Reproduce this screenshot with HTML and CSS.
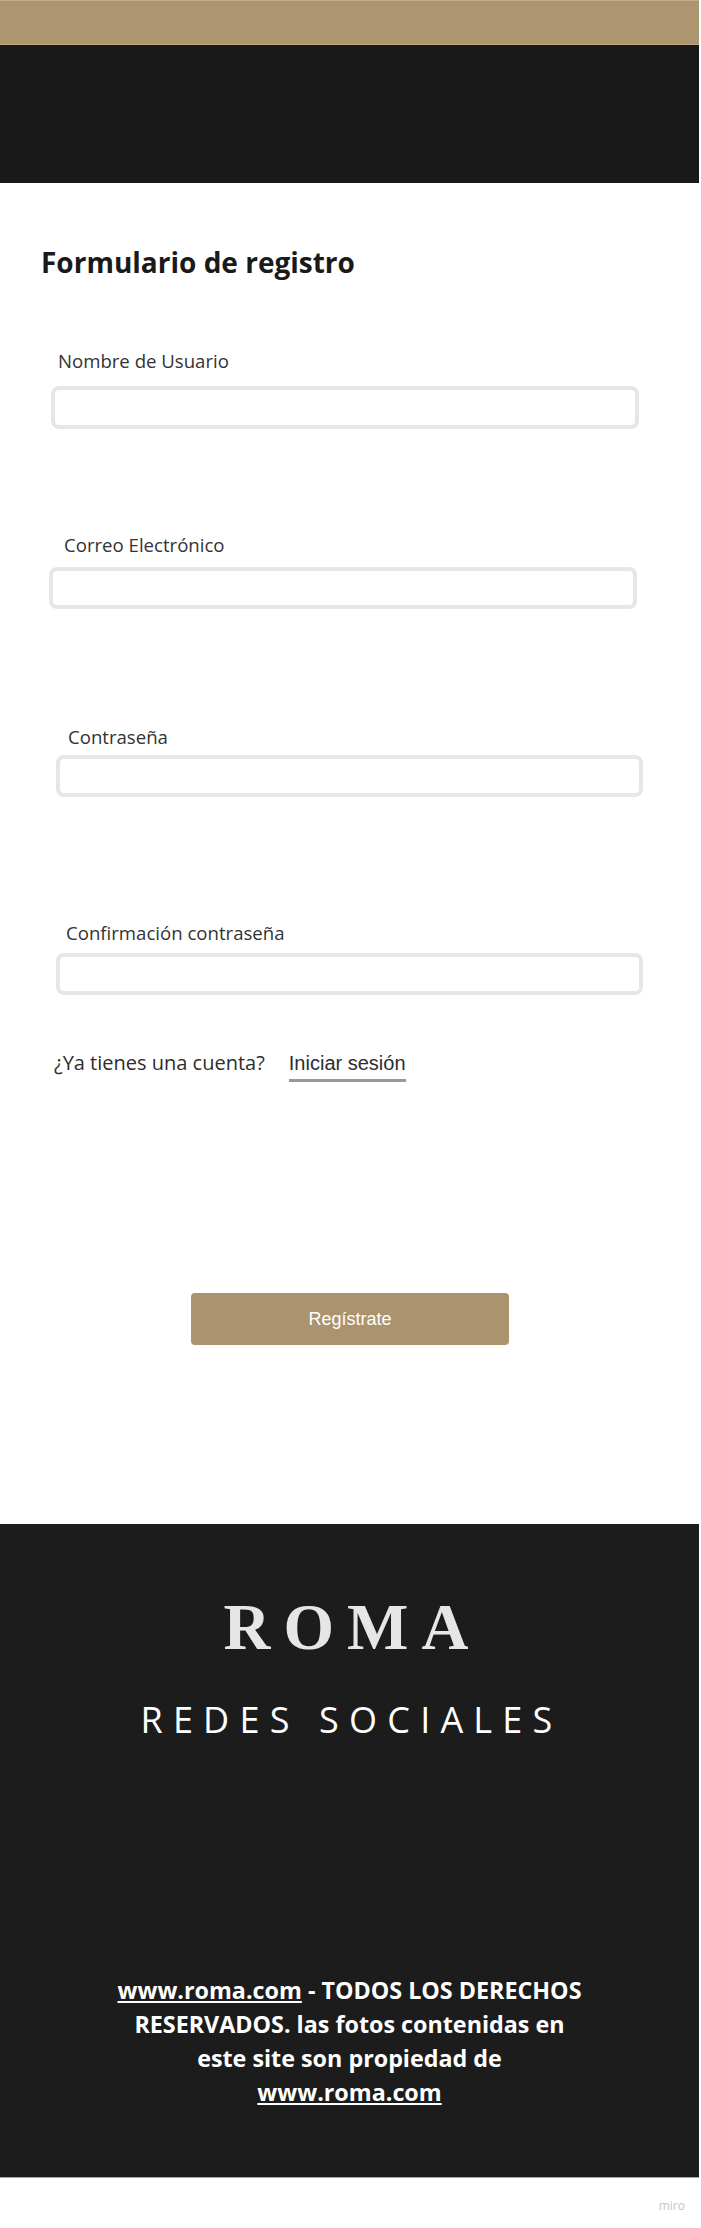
FILE: index.html
```html
<!DOCTYPE html>
<html lang="es">
<head>
<meta charset="utf-8">
<title>Formulario de registro - ROMA</title>
<link rel="stylesheet" href="styles.css">
</head>
<body>
<div class="page">
  <header class="header">
    <div class="header-top"></div>
    <div class="header-main"></div>
  </header>

  <main class="main">
    <h1 class="title">Formulario de registro</h1>

    <div class="field field-user">
      <label class="label" for="user">Nombre de Usuario</label>
      <input class="input" id="user" type="text">
    </div>

    <div class="field field-email">
      <label class="label" for="email">Correo Electrónico</label>
      <input class="input" id="email" type="email">
    </div>

    <div class="field field-pass">
      <label class="label" for="pass">Contraseña</label>
      <input class="input" id="pass" type="password">
    </div>

    <div class="field field-confirm">
      <label class="label" for="confirm">Confirmación contraseña</label>
      <input class="input" id="confirm" type="password">
    </div>

    <div class="login-row">
      <span class="login-question">¿Ya tienes una cuenta?</span>
      <a class="login-link" href="#">Iniciar sesión</a>
    </div>

    <div class="submit-row">
      <button class="submit" type="button">Regístrate</button>
    </div>
  </main>

  <footer class="footer">
    <div class="brand">ROMA</div>
    <div class="social">REDES SOCIALES</div>
    <p class="copyright"><a href="#">www.roma.com</a> - TODOS LOS DERECHOS RESERVADOS. las fotos contenidas en este site son propiedad de <a href="#">www.roma.com</a></p>
  </footer>

  <div class="watermark"><span>miro</span></div>
</div>
</body>
</html>
```

FILE: styles.css
```css
* {
  box-sizing: border-box;
}

html, body {
  margin: 0;
  padding: 0;
  background: #ffffff;
}

body {
  font-family: "Open Sans", "Liberation Sans", sans-serif;
  color: #2e2e2e;
}

.page {
  width: 699px;
}

/* Header */
.header-top {
  height: 45px;
  background: #ad956f;
  border-top: 1px solid #c2ad8c;
  border-bottom: 1px solid #bfa988;
}

.header-main {
  height: 138px;
  background: #191919;
}

/* Main */
.main {
  padding: 61px 0 179px;
  display: flex;
  flex-direction: column;
}

.title {
  margin: 0 0 0 41px;
  font-size: 28px;
  line-height: 36px;
  font-weight: 700;
  color: #1a1a1a;
}

.field {
  display: flex;
  flex-direction: column;
}

.label {
  font-size: 18.6px;
  line-height: 24px;
  color: #333333;
}

.input {
  height: 42px;
  width: 588px;
  border: 4px solid #e6e6e6;
  border-radius: 8px;
  background: #ffffff;
  outline: none;
  font: inherit;
}

.field-user { margin-top: 69px; }
.field-user .label { margin-left: 58px; }
.field-user .input { margin: 13px 0 0 51px; height: 43px; }

.field-email { margin-top: 104px; }
.field-email .label { margin-left: 64px; }
.field-email .input { margin: 10px 0 0 49px; }

.field-pass { margin-top: 116px; }
.field-pass .label { margin-left: 68px; }
.field-pass .input { margin: 6px 0 0 56px; width: 587px; }

.field-confirm { margin-top: 124px; }
.field-confirm .label { margin-left: 66px; }
.field-confirm .input { margin: 8px 0 0 56px; width: 587px; }

.login-row {
  margin: 54px 0 0 54px;
  display: flex;
  align-items: baseline;
  gap: 24px;
}

.login-question {
  font-size: 20px;
  line-height: 28px;
  color: #2e2e2e;
}

.login-link {
  display: inline-block;
  font-family: "Liberation Sans", Arial, sans-serif;
  font-size: 20px;
  line-height: 28px;
  color: #2e2e2e;
  text-decoration: none;
  padding-bottom: 2px;
  border-bottom: 3px solid #999999;
}

.submit-row {
  margin-top: 211px;
  display: flex;
  padding-left: 191px;
}

.submit {
  width: 318px;
  height: 52px;
  border: none;
  border-radius: 4px;
  background: #ab936e;
  color: #ffffff;
  font-family: "Liberation Sans", Arial, sans-serif;
  font-size: 18px;
  cursor: pointer;
}

/* Footer */
.footer {
  background: #1c1c1c;
  padding: 63px 0 68px;
  border-bottom: 1px solid #a8a8a8;
  display: flex;
  flex-direction: column;
  align-items: center;
  text-align: center;
}

.brand {
  font-family: "Liberation Serif", "Times New Roman", serif;
  font-weight: 700;
  font-size: 65px;
  line-height: 80px;
  letter-spacing: 13px;
  padding-left: 6px;
  color: #e6e6e6;
}

.social {
  margin-top: 29px;
  font-size: 36px;
  line-height: 48px;
  font-weight: 400;
  letter-spacing: 10.2px;
  padding-left: 4px;
  color: #ffffff;
}

.copyright {
  margin: 229px 0 0;
  width: 476px;
  font-size: 23.3px;
  line-height: 34px;
  font-weight: 700;
  color: #ffffff;
}

.copyright a {
  color: #ffffff;
  text-decoration: underline;
  text-decoration-thickness: 2px;
  text-underline-offset: 2px;
}

.watermark {
  height: 49px;
  display: flex;
  justify-content: flex-end;
  align-items: center;
  padding: 6px 14px 0 0;
}

.watermark span {
  font-size: 12px;
  color: #c4c4c4;
}
```
